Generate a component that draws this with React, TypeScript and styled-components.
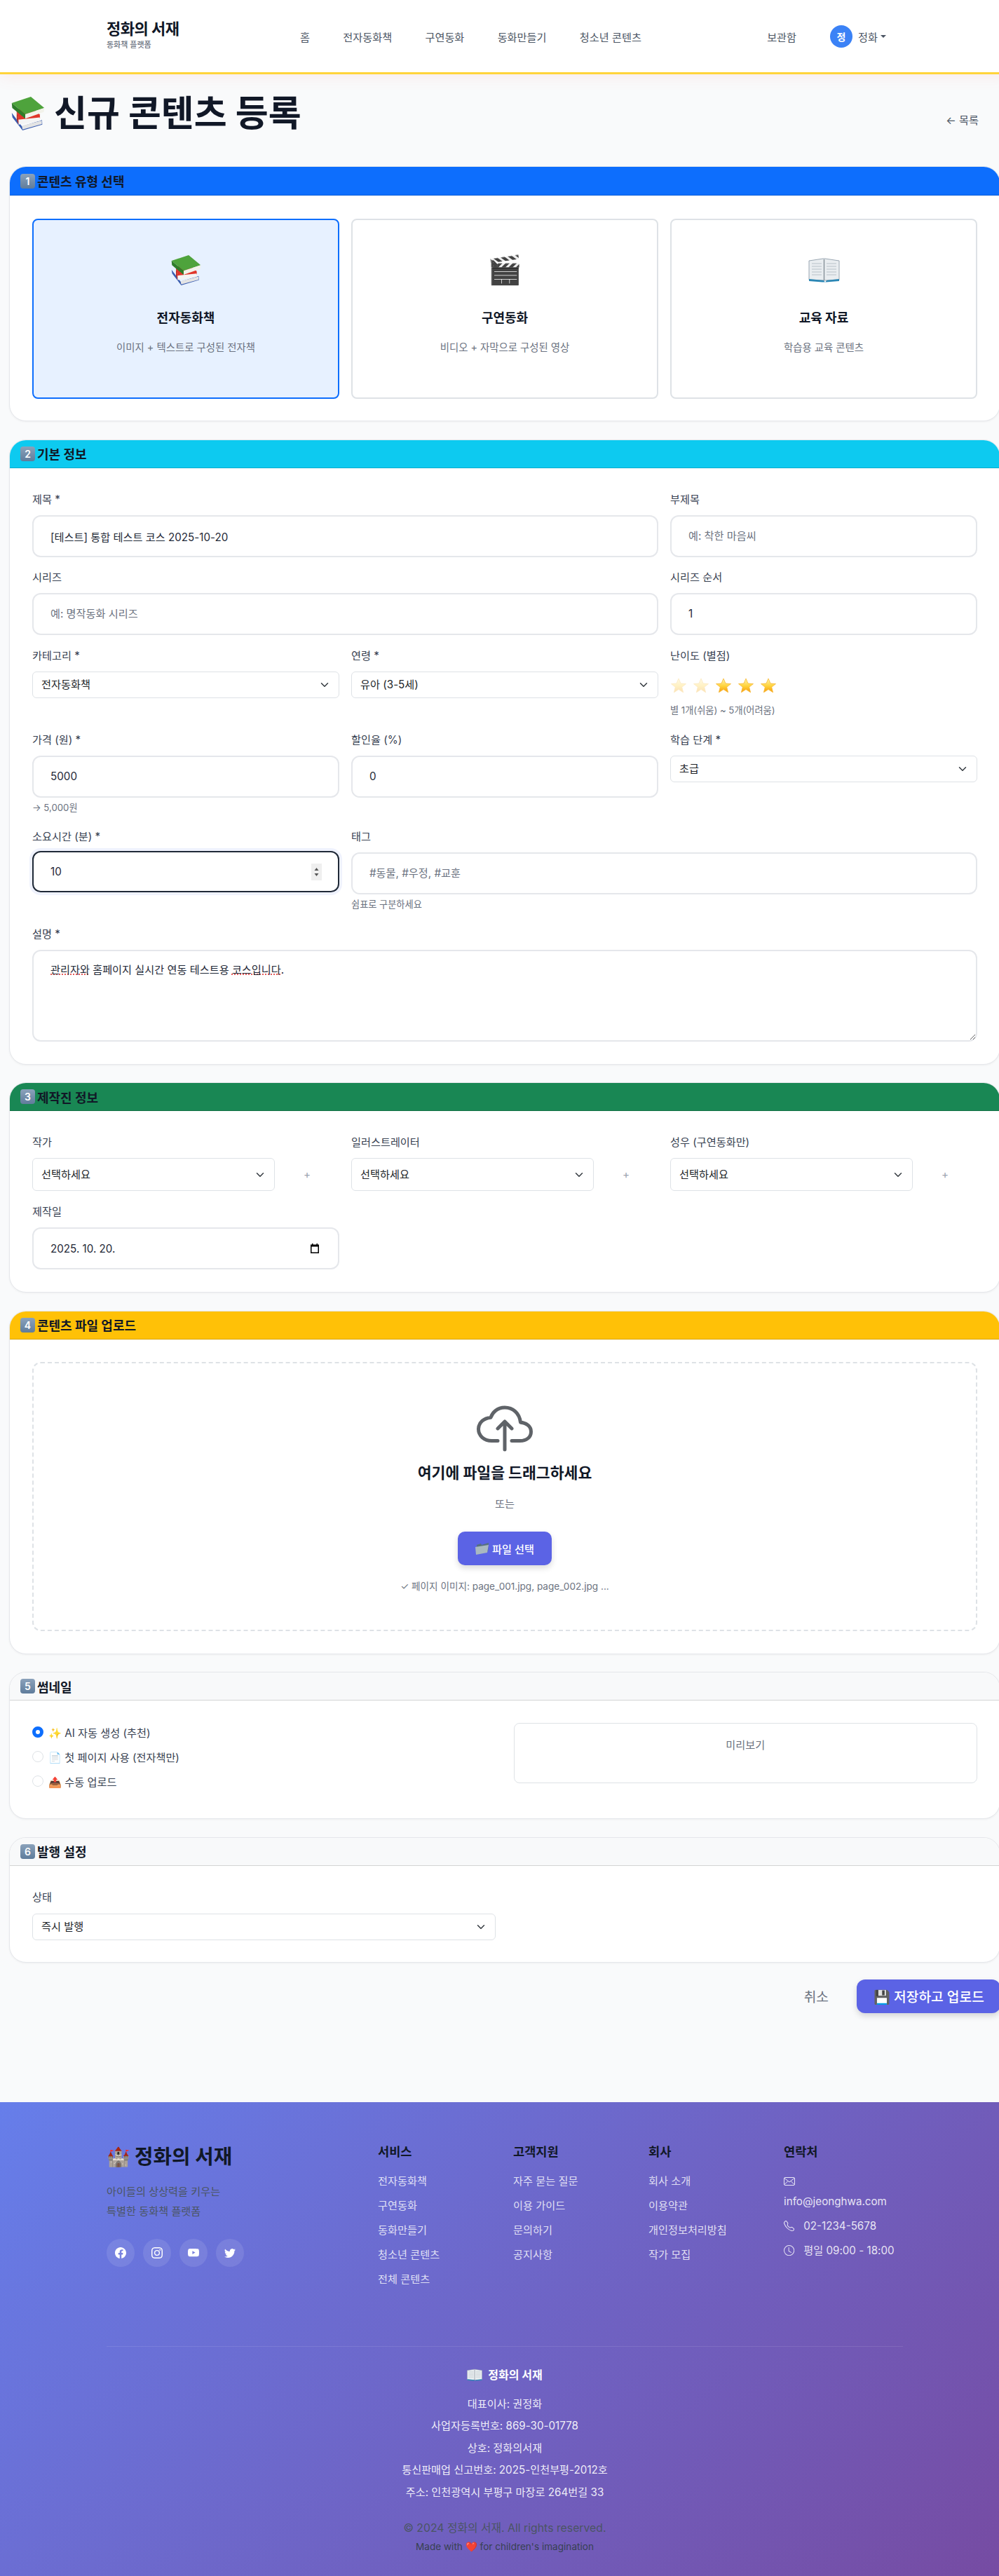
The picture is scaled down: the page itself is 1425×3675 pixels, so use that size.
import React from 'react';
import styled, { createGlobalStyle } from 'styled-components';
import { IoCloudUploadOutline } from 'react-icons/io5';
import { BsFacebook, BsInstagram, BsYoutube, BsTwitter, BsTelephone, BsClock } from 'react-icons/bs';

const chevron = `url("data:image/svg+xml,%3csvg xmlns='http://www.w3.org/2000/svg' viewBox='0 0 16 16'%3e%3cpath fill='none' stroke='%23343a40' stroke-linecap='round' stroke-linejoin='round' stroke-width='2' d='m2 5 6 6 6-6'/%3e%3c/svg%3e")`;

const GlobalStyle = createGlobalStyle`
  html, body { margin: 0; padding: 0; overflow-x: hidden; background: #f9fafb; }
  body { font-family: Inter, "Noto Sans CJK KR", "Noto Sans", sans-serif; color: #111827; }
  * { box-sizing: border-box; }
`;

const Page = styled.div`
  width: 1440px;
  height: 3675px;
  display: flex;
  flex-direction: column;
  overflow: hidden;
`;

const Header = styled.header`
  height: 106px;
  flex: none;
  background: #fff;
  border-bottom: 3px solid #ffd43b;
  box-shadow: 0 4px 20px rgba(255, 107, 107, 0.1);
  padding: 0 176px 0 152px;
  display: flex;
  align-items: center;
`;

const Brand = styled.div`
  width: 276px;
  margin-bottom: 4px;
  display: flex;
  flex-direction: column;
`;
const BrandName = styled.div`
  font-size: 22px;
  font-weight: 700;
  line-height: 28px;
  letter-spacing: -0.5px;
`;
const BrandSub = styled.div`
  font-size: 11px;
  line-height: 18px;
  font-weight: 500;
  color: #6b7280;
`;
const Nav = styled.nav`
  display: flex;
  gap: 47.3px;
  flex: 1;
`;
const NavLink = styled.a`
  font-size: 15.2px;
  color: #4b5563;
`;
const UserArea = styled.div`
  display: flex;
  align-items: center;
  font-size: 15.2px;
  color: #4b5563;
  gap: 8px;
`;
const Avatar = styled.span`
  width: 32px;
  height: 32px;
  margin-left: 40px;
  border-radius: 50%;
  background: #3b82f6;
  color: #fff;
  font-size: 14px;
  font-weight: 600;
  display: flex;
  align-items: center;
  justify-content: center;
`;
const Caret = styled.span`
  width: 0;
  height: 0;
  margin-left: -4px;
  border-left: 4px solid transparent;
  border-right: 4px solid transparent;
  border-top: 4px solid #4b5563;
`;

const Main = styled.main`
  padding: 0 13px;
  flex: 1;
`;
const TitleRow = styled.div`
  display: flex;
  align-items: flex-start;
  justify-content: space-between;
  height: 131px;
  padding-top: 26px;
`;
const Title = styled.h1`
  margin: 0;
  display: flex;
  align-items: center;
  gap: 13px;
  padding-left: 3px;
  font-size: 51px;
  line-height: 60px;
  font-weight: 700;
  color: #111827;
`;
const BackLink = styled.a`
  margin-top: 30px;
  font-size: 15.2px;
  line-height: 20px;
  color: #4b5563;
  padding-right: 31px;
`;

const Section = styled.section`
  background: #fff;
  border: 1px solid #e5e7eb;
  border-radius: 24px;
  box-shadow: 0 1px 3px rgba(0, 0, 0, 0.05);
  overflow: hidden;
  margin-bottom: 25.5px;
`;
const SectionHead = styled.h5<{ $bg: string; $h?: number }>`
  margin: 0;
  height: ${p => p.$h ?? 40}px;
  background: ${p => p.$bg};
  border-bottom: 1px solid rgba(0, 0, 0, 0.15);
  padding: 0 15px;
  display: flex;
  align-items: center;
  gap: 3px;
  font-size: 18px;
  font-weight: 700;
  color: #111827;
`;
const Keycap = styled.span`
  width: 21px;
  height: 21px;
  border-radius: 4px;
  background: linear-gradient(180deg, #8ba2bb 0%, #5f7c9b 100%);
  color: #fff;
  font-size: 14px;
  font-weight: 600;
  display: flex;
  align-items: center;
  justify-content: center;
`;
const SectionBody = styled.div<{ $pad: string }>`
  padding: ${p => p.$pad};
`;

const Grid3 = styled.div`
  display: grid;
  grid-template-columns: repeat(3, 1fr);
  column-gap: 17px;
`;
const TypeCard = styled.div<{ $active?: boolean }>`
  height: 257px;
  border: 2px solid ${p => (p.$active ? '#0d6efd' : '#dee2e6')};
  border-radius: 8px;
  background: ${p => (p.$active ? '#e7f1ff' : '#fff')};
  display: flex;
  flex-direction: column;
  align-items: center;
  padding-top: 43.5px;
`;
const TypeEmoji = styled.div`
  height: 56px;
  font-size: 40px;
  line-height: 56px;
  margin-bottom: 29px;
  display: flex;
  align-items: center;
`;
const TypeTitle = styled.div`
  font-size: 18px;
  font-weight: 700;
  line-height: 24px;
  margin-bottom: 20px;
`;
const TypeDesc = styled.div`
  font-size: 14.4px;
  line-height: 20px;
  color: #6b7280;
`;

const Field = styled.div<{ $span?: number }>`
  grid-column: span ${p => p.$span ?? 1};
  min-width: 0;
`;
const Label = styled.label`
  display: block;
  font-size: 15.2px;
  line-height: 20px;
  margin-bottom: 12px;
  color: #374151;
`;
const Input = styled.input<{ $focus?: boolean }>`
  display: block;
  width: 100%;
  height: ${p => (p.$focus ? 59 : 60)}px;
  border: 2px solid ${p => (p.$focus ? '#1f2937' : '#e5e7eb')};
  border-radius: 12px;
  padding: 0 24px;
  font: inherit;
  font-size: 15.2px;
  color: #1f2937;
  background: #fff;
  outline: none;
  box-shadow: ${p => (p.$focus ? '0 0 0 4px rgba(102,126,234,0.1)' : 'none')};
  &::placeholder { color: #6b7280; }
`;
const Select = styled.select<{ $h?: number }>`
  display: block;
  width: 100%;
  height: ${p => p.$h ?? 38}px;
  appearance: none;
  border: 1px solid #dee2e6;
  border-radius: 6px;
  padding: 0 36px 0 12px;
  font: inherit;
  font-size: 15.2px;
  color: #212529;
  background: #fff ${chevron} no-repeat right 12px center / 16px 12px;
`;
const Hint = styled.div`
  font-size: 13.2px;
  line-height: 18px;
  color: #6b7280;
  margin-top: 5px;
`;
const Row = styled.div<{ $mb: number }>`
  margin-bottom: ${p => p.$mb}px;
`;
const Stars = styled.div`
  display: flex;
  gap: 8px;
  height: 41px;
  align-items: center;
`;
const StarSvg = styled.svg<{ $dim?: boolean }>`
  width: 24px;
  height: 24px;
  opacity: ${p => (p.$dim ? 0.3 : 1)};
`;
const InputWrap = styled.div<{ $lift?: number }>`
  position: relative;
  margin-top: ${p => -(p.$lift ?? 0)}px;
`;
const Spinner = styled.svg`
  position: absolute;
  right: 25px;
  top: 18px;
  width: 15px;
  height: 24px;
  background: #efefef;
`;
const CalendarSvg = styled.svg`
  position: absolute;
  right: 28px;
  top: 23px;
  width: 14px;
  height: 14px;
`;
const TextArea = styled.div`
  border: 2px solid #e5e7eb;
  border-radius: 12px;
  height: 131px;
  padding: 16px 24px;
  font-size: 15.2px;
  line-height: 22px;
  color: #1f2937;
  overflow: auto;
  resize: vertical;
`;
const Misspelt = styled.span`
  text-decoration: underline dotted #dc2626;
`;
const PersonRow = styled.div`
  display: flex;
  align-items: center;
`;
const Plus = styled.span`
  flex: none;
  width: 92px;
  font-size: 15.2px;
  color: #9ca3af;
  text-align: center;
`;

const DropZone = styled.div`
  height: 384px;
  border: 2px dashed #dee2e6;
  border-radius: 12px;
  display: flex;
  flex-direction: column;
  align-items: center;
  padding-top: 53px;
`;
const CloudIcon = styled(IoCloudUploadOutline)`
  flex: none;
  width: 80px;
  height: 80px;
  color: #5f6368;
`;
const DropTitle = styled.div`
  margin-top: 8.5px;
  font-size: 21.6px;
  line-height: 30px;
  font-weight: 700;
`;
const DropOr = styled.div`
  margin-top: 20px;
  font-size: 15.2px;
  line-height: 20px;
  color: #6b7280;
`;
const PickButton = styled.button`
  margin-top: 29px;
  width: 134px;
  height: 48px;
  border: none;
  border-radius: 10px;
  background: #5b63e5;
  color: #fff;
  font: inherit;
  font-size: 15.2px;
  font-weight: 500;
  display: flex;
  align-items: center;
  justify-content: center;
  gap: 4px;
  box-shadow: 0 4px 8px rgba(0, 0, 0, 0.15);
`;
const DropStatus = styled.div`
  margin-top: 21px;
  font-size: 13.6px;
  line-height: 18px;
  color: #6b7280;
`;

const ThumbGrid = styled.div`
  display: grid;
  grid-template-columns: 1fr 1fr;
  column-gap: 25px;
`;
const RadioRow = styled.label`
  display: flex;
  align-items: center;
  height: 25px;
  margin-bottom: 10px;
  gap: 7px;
  font-size: 15.2px;
  color: #374151;
`;
const Radio = styled.span<{ $on?: boolean }>`
  width: 16px;
  height: 16px;
  border-radius: 50%;
  border: ${p => (p.$on ? '5px solid #0d6efd' : '1px solid #dee2e6')};
  background: #fff;
`;
const Preview = styled.div`
  height: 86px;
  border: 1px solid #dee2e6;
  border-radius: 8px;
  padding-top: 20px;
  text-align: center;
  font-size: 15.2px;
  line-height: 22px;
  color: #6b7280;
`;
const Half = styled.div`
  width: 661px;
`;
const StatusLabel = styled(Label)`
  margin-bottom: 13px;
`;

const Actions = styled.div`
  display: flex;
  justify-content: flex-end;
  align-items: center;
  gap: 40px;
  margin-top: -1px;
`;
const CancelBtn = styled.a`
  font-size: 19.2px;
  color: #6b7280;
`;
const SaveBtn = styled.button`
  height: 48px;
  width: 205px;
  border: none;
  border-radius: 12px;
  background: #5b63e5;
  color: #fff;
  font: inherit;
  font-size: 19.2px;
  font-weight: 500;
  text-align: left;
  white-space: nowrap;
  padding: 0 0 0 24px;
  box-shadow: 0 4px 8px rgba(0, 0, 0, 0.15);
`;

const Footer = styled.footer`
  height: 676px;
  flex: none;
  background: linear-gradient(135deg, #667eea 0%, #764ba2 100%);
  padding: 0 152px;
`;
const FooterTop = styled.div`
  display: grid;
  grid-template-columns: 387px repeat(3, 193px) 170px;
  height: 349px;
  padding-top: 60px;
  border-bottom: 1px solid rgba(255, 255, 255, 0.1);
`;
const FooterBrand = styled.div`
  display: flex;
  align-items: center;
  gap: 6px;
  font-size: 28.8px;
  line-height: 36px;
  font-weight: 700;
  color: #111827;
`;
const BrandEmoji = styled.span`
  font-size: 27px;
`;
const FooterDesc = styled.p`
  margin: 18px 0 25px;
  font-size: 15.2px;
  line-height: 28px;
  color: #4b5563;
`;
const Socials = styled.div`
  display: flex;
  gap: 12px;
`;
const SocialLink = styled.a`
  width: 40px;
  height: 40px;
  border-radius: 50%;
  background: rgba(255, 255, 255, 0.1);
  color: #fff;
  display: flex;
  align-items: center;
  justify-content: center;
  font-size: 16px;
`;
const ColTitle = styled.h4`
  margin: 0 0 20.6px;
  font-size: 17.6px;
  line-height: 22px;
  font-weight: 700;
  color: #111827;
`;
const FootLink = styled.a`
  display: block;
  font-size: 15.2px;
  line-height: 20px;
  margin-bottom: 15.2px;
  color: rgba(255, 255, 255, 0.8);
`;
const ContactList = styled.div`
  margin-top: -2px;
`;
const ContactLine = styled.div`
  display: flex;
  align-items: center;
  flex-wrap: wrap;
  column-gap: 13px;
  row-gap: 5px;
  font-size: 15.2px;
  line-height: 24px;
  margin-bottom: 11px;
  color: rgba(255, 255, 255, 0.85);
  & > svg {
    margin: 4px 0;
  }
`;
const CompanyBlock = styled.div`
  padding-top: 28px;
  text-align: center;
`;
const CompanyName = styled.div`
  display: flex;
  align-items: center;
  justify-content: center;
  gap: 8px;
  font-size: 16px;
  font-weight: 700;
  line-height: 24px;
  margin-bottom: 14px;
  color: #fff;
`;
const CompanyLine = styled.div`
  font-size: 15.2px;
  line-height: 31.4px;
  color: rgba(255, 255, 255, 0.9);
`;
const Copyright = styled.div`
  margin-top: 23px;
  font-size: 15.8px;
  line-height: 26px;
  color: #4b5563;
`;
const MadeWith = styled.div`
  font-size: 13.6px;
  line-height: 26px;
  color: #374151;
`;

const nav = ['홈', '전자동화책', '구연동화', '동화만들기', '청소년 콘텐츠'];
const cols = [
  { title: '서비스', links: ['전자동화책', '구연동화', '동화만들기', '청소년 콘텐츠', '전체 콘텐츠'] },
  { title: '고객지원', links: ['자주 묻는 질문', '이용 가이드', '문의하기', '공지사항'] },
  { title: '회사', links: ['회사 소개', '이용약관', '개인정보처리방침', '작가 모집'] }
];

// the stacked-books emoji, same drawing for the page title and the first card
const BooksIcon = ({ size }: { size: number }) => (
  <svg width={size} height={size} viewBox="0 0 145 150">
    <polygon points="0,72 45,132 135,104 136,124 48,150 3,92" fill="#3a5db0" />
    <polygon points="45,130 134,106 134,122 48,146" fill="#e4e4e4" />
    <polygon points="20,55 30,108 126,96 125,80 100,55" fill="#e0352a" />
    <polygon points="28,102 125,92 125,108 30,124" fill="#f4f4f4" />
    <polygon points="22,62 30,108 30,124 22,100" fill="#b5261d" />
    <polygon points="0,28 85,0 145,50 60,78" fill="#4ea33c" />
    <polygon points="60,78 145,50 143,68 60,98" fill="#f2f2ea" />
    <polygon points="0,28 60,78 60,98 2,50" fill="#2f7d2a" />
  </svg>
);

const OpenBookIcon = ({ w, h }: { w: number; h: number }) => (
  <svg width={w} height={h} viewBox="0 0 45 36">
    <path d="M1 5 L21 2 L24 2 L44 5 L44 32 L24 33 L21 33 L1 32 Z" fill="#e9edf0" stroke="#9aa7b2" strokeWidth="1" />
    <path d="M22.5 3 V33" stroke="#8a949c" strokeWidth="1.5" />
    <path d="M5 9 H19 M5 13 H19 M5 17 H19 M5 21 H19 M5 25 H19 M26 9 H40 M26 13 H40 M26 17 H40 M26 21 H40 M26 25 H40" stroke="#b8c1c8" strokeWidth="1" />
    <path d="M1 31 L22 33 L24 36 L26 33 L44 31 L44 34 L25 35.5 L20 35.5 L1 34 Z" fill="#2b87b5" />
  </svg>
);

const StarIcon = ({ dim }: { dim?: boolean }) => (
  <StarSvg $dim={dim} viewBox="0 0 24 24">
    <defs>
      <linearGradient id="star-fill" x1="0" y1="0" x2="0" y2="1">
        <stop offset="0" stopColor="#fff6b0" />
        <stop offset="0.55" stopColor="#ffd23a" />
        <stop offset="1" stopColor="#f59a0c" />
      </linearGradient>
    </defs>
    <polygon
      points="12,2 15,9 22.5,9.6 16.7,14.3 18.6,21.8 12,17.6 5.4,21.8 7.3,14.3 1.5,9.6 9,9"
      fill="url(#star-fill)"
      stroke="#f7b733"
      strokeWidth="0.8"
      strokeLinejoin="round"
    />
  </StarSvg>
);

const FolderIcon = () => (
  <svg width="20" height="18" viewBox="0 0 20 18">
    <polygon points="2,4 8,2 9,4 19,1 18,13 3,16" fill="#56707f" />
    <polygon points="0,7 19,4 17,15 1,18" fill="#a9b8c0" />
  </svg>
);

const MailIcon = () => (
  <svg width="16" height="16" viewBox="0 0 16 16" fill="none" stroke="currentColor" strokeWidth="1">
    <rect x="0.5" y="2.5" width="15" height="11" rx="1.5" />
    <path d="M1 3.5 L8 9 L15 3.5 M1 12.5 L6 7.5 M15 12.5 L10 7.5" />
  </svg>
);

const CalendarIcon = () => (
  <CalendarSvg viewBox="0 0 14 14">
    <path d="M3 0 H4.5 V1.5 H9.5 V0 H11 V1.5 H13 V14 H1 V1.5 H3 Z M2.5 4.5 V12.5 H11.5 V4.5 Z" fill="#000" />
  </CalendarSvg>
);

const SpinnerIcon = () => (
  <Spinner viewBox="0 0 15 24">
    <path d="M7.5 6 L10.5 10 H4.5 Z M7.5 18 L4.5 14 H10.5 Z" fill="#555" />
  </Spinner>
);

const App = () => (
  <Page>
    <GlobalStyle />
    <Header>
      <Brand>
        <BrandName>정화의 서재</BrandName>
        <BrandSub>동화책 플랫폼</BrandSub>
      </Brand>
      <Nav>
        {nav.map(x => (
          <NavLink key={x}>{x}</NavLink>
        ))}
      </Nav>
      <UserArea>
        <NavLink>보관함</NavLink>
        <Avatar>정</Avatar>
        <span>정화</span>
        <Caret />
      </UserArea>
    </Header>
    <Main>
      <TitleRow>
        <Title>
          <BooksIcon size={48} />
          신규 콘텐츠 등록
        </Title>
        <BackLink>← 목록</BackLink>
      </TitleRow>

      <Section>
        <SectionHead $bg="#0d6efd" $h={41}><Keycap>1</Keycap>콘텐츠 유형 선택</SectionHead>
        <SectionBody $pad="32.5px 32px 31.5px">
          <Grid3>
            <TypeCard $active>
              <TypeEmoji><BooksIcon size={43} /></TypeEmoji>
              <TypeTitle>전자동화책</TypeTitle>
              <TypeDesc>이미지 + 텍스트로 구성된 전자책</TypeDesc>
            </TypeCard>
            <TypeCard>
              <TypeEmoji>🎬</TypeEmoji>
              <TypeTitle>구연동화</TypeTitle>
              <TypeDesc>비디오 + 자막으로 구성된 영상</TypeDesc>
            </TypeCard>
            <TypeCard>
              <TypeEmoji><OpenBookIcon w={45} h={36} /></TypeEmoji>
              <TypeTitle>교육 자료</TypeTitle>
              <TypeDesc>학습용 교육 콘텐츠</TypeDesc>
            </TypeCard>
          </Grid3>
        </SectionBody>
      </Section>

      <Section>
        <SectionHead $bg="#0dcaf0"><Keycap>2</Keycap>기본 정보</SectionHead>
        <SectionBody $pad="35px 32px 32px">
          <Row $mb={19}>
            <Grid3>
              <Field $span={2}>
                <Label>제목 *</Label>
                <Input readOnly value="[테스트] 통합 테스트 코스 2025-10-20" />
              </Field>
              <Field>
                <Label>부제목</Label>
                <Input readOnly placeholder="예: 착한 마음씨" />
              </Field>
            </Grid3>
          </Row>
          <Row $mb={20}>
            <Grid3>
              <Field $span={2}>
                <Label>시리즈</Label>
                <Input readOnly placeholder="예: 명작동화 시리즈" />
              </Field>
              <Field>
                <Label>시리즈 순서</Label>
                <Input readOnly value="1" />
              </Field>
            </Grid3>
          </Row>
          <Row $mb={24}>
            <Grid3>
              <Field>
                <Label>카테고리 *</Label>
                <Select><option>전자동화책</option></Select>
              </Field>
              <Field>
                <Label>연령 *</Label>
                <Select><option>유아 (3-5세)</option></Select>
              </Field>
              <Field>
                <Label>난이도 (별점)</Label>
                <Stars>
                  <StarIcon dim />
                  <StarIcon dim />
                  <StarIcon />
                  <StarIcon />
                  <StarIcon />
                </Stars>
                <Hint>별 1개(쉬움) ~ 5개(어려움)</Hint>
              </Field>
            </Grid3>
          </Row>
          <Row $mb={23}>
            <Grid3>
              <Field>
                <Label>가격 (원) *</Label>
                <Input readOnly value="5000" />
                <Hint>→ 5,000원</Hint>
              </Field>
              <Field>
                <Label>할인율 (%)</Label>
                <Input readOnly value="0" />
              </Field>
              <Field>
                <Label>학습 단계 *</Label>
                <Select><option>초급</option></Select>
              </Field>
            </Grid3>
          </Row>
          <Row $mb={24}>
            <Grid3>
              <Field>
                <Label>소요시간 (분) *</Label>
                <InputWrap $lift={2}>
                  <Input readOnly $focus value="10" />
                  <SpinnerIcon />
                </InputWrap>
              </Field>
              <Field $span={2}>
                <Label>태그</Label>
                <Input readOnly placeholder="#동물, #우정, #교훈" />
                <Hint>쉼표로 구분하세요</Hint>
              </Field>
            </Grid3>
          </Row>
          <Label>설명 *</Label>
          <TextArea>
            <Misspelt>관리자와</Misspelt> 홈페이지 실시간 연동 테스트용 <Misspelt>코스입니다</Misspelt>.
          </TextArea>
        </SectionBody>
      </Section>

      <Section>
        <SectionHead $bg="#198754"><Keycap>3</Keycap>제작진 정보</SectionHead>
        <SectionBody $pad="35px 32px 32px">
          <Row $mb={20}>
            <Grid3>
              <Field>
                <Label>작가</Label>
                <PersonRow>
                  <Select $h={47}><option>선택하세요</option></Select>
                  <Plus>+</Plus>
                </PersonRow>
              </Field>
              <Field>
                <Label>일러스트레이터</Label>
                <PersonRow>
                  <Select $h={47}><option>선택하세요</option></Select>
                  <Plus>+</Plus>
                </PersonRow>
              </Field>
              <Field>
                <Label>성우 (구연동화만)</Label>
                <PersonRow>
                  <Select $h={47}><option>선택하세요</option></Select>
                  <Plus>+</Plus>
                </PersonRow>
              </Field>
            </Grid3>
          </Row>
          <Grid3>
            <Field>
              <Label>제작일</Label>
              <InputWrap>
                <Input readOnly value="2025. 10. 20." />
                <CalendarIcon />
              </InputWrap>
            </Field>
          </Grid3>
        </SectionBody>
      </Section>

      <Section>
        <SectionHead $bg="#ffc107"><Keycap>4</Keycap>콘텐츠 파일 업로드</SectionHead>
        <SectionBody $pad="32px">
          <DropZone>
            <CloudIcon />
            <DropTitle>여기에 파일을 드래그하세요</DropTitle>
            <DropOr>또는</DropOr>
            <PickButton><FolderIcon />파일 선택</PickButton>
            <DropStatus>✓ 페이지 이미지: page_001.jpg, page_002.jpg ...</DropStatus>
          </DropZone>
        </SectionBody>
      </Section>

      <Section>
        <SectionHead $bg="#f8f9fa"><Keycap>5</Keycap>썸네일</SectionHead>
        <SectionBody $pad="32px 32px 31px">
          <ThumbGrid>
            <div>
              <RadioRow><Radio $on />✨ AI 자동 생성 (추천)</RadioRow>
              <RadioRow><Radio />📄 첫 페이지 사용 (전자책만)</RadioRow>
              <RadioRow><Radio />📤 수동 업로드</RadioRow>
            </div>
            <Preview>미리보기</Preview>
          </ThumbGrid>
        </SectionBody>
      </Section>

      <Section>
        <SectionHead $bg="#f8f9fa"><Keycap>6</Keycap>발행 설정</SectionHead>
        <SectionBody $pad="35px 32px 31px">
          <Half>
            <StatusLabel>상태</StatusLabel>
            <Select><option>즉시 발행</option></Select>
          </Half>
        </SectionBody>
      </Section>

      <Actions>
        <CancelBtn>취소</CancelBtn>
        <SaveBtn>💾 저장하고 업로드</SaveBtn>
      </Actions>
    </Main>

    <Footer>
      <FooterTop>
        <div>
          <FooterBrand><BrandEmoji>🏰</BrandEmoji>정화의 서재</FooterBrand>
          <FooterDesc>아이들의 상상력을 키우는<br />특별한 동화책 플랫폼</FooterDesc>
          <Socials>
            <SocialLink><BsFacebook /></SocialLink>
            <SocialLink><BsInstagram /></SocialLink>
            <SocialLink><BsYoutube /></SocialLink>
            <SocialLink><BsTwitter /></SocialLink>
          </Socials>
        </div>
        {cols.map(c => (
          <div key={c.title}>
            <ColTitle>{c.title}</ColTitle>
            {c.links.map(l => (
              <FootLink key={l}>{l}</FootLink>
            ))}
          </div>
        ))}
        <div>
          <ColTitle>연락처</ColTitle>
          <ContactList>
            <ContactLine><MailIcon /><span>info@jeonghwa.com</span></ContactLine>
            <ContactLine><BsTelephone /><span>02-1234-5678</span></ContactLine>
            <ContactLine><BsClock /><span>평일 09:00 - 18:00</span></ContactLine>
          </ContactList>
        </div>
      </FooterTop>
      <CompanyBlock>
        <CompanyName><OpenBookIcon w={22} h={18} />정화의 서재</CompanyName>
        <CompanyLine>대표이사: 권정화</CompanyLine>
        <CompanyLine>사업자등록번호: 869-30-01778</CompanyLine>
        <CompanyLine>상호: 정화의서재</CompanyLine>
        <CompanyLine>통신판매업 신고번호: 2025-인천부평-2012호</CompanyLine>
        <CompanyLine>주소: 인천광역시 부평구 마장로 264번길 33</CompanyLine>
        <Copyright>© 2024 정화의 서재. All rights reserved.</Copyright>
        <MadeWith>Made with ❤️ for children's imagination</MadeWith>
      </CompanyBlock>
    </Footer>
  </Page>
);

export default App;
